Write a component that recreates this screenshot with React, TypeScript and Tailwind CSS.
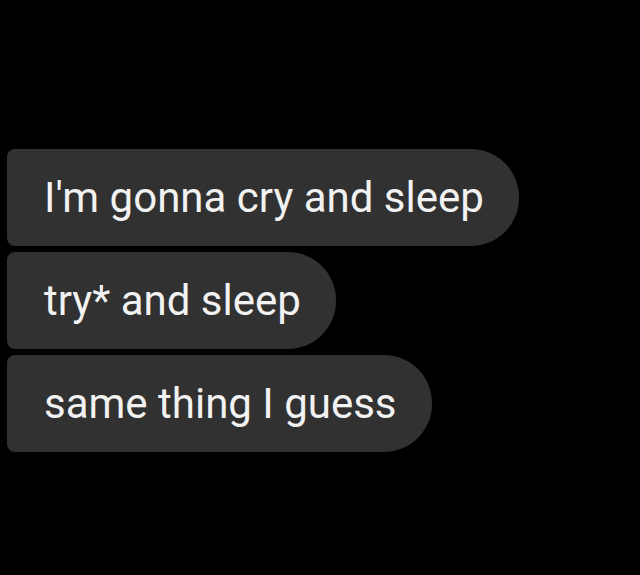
const messages = ["I'm gonna cry and sleep", 'try* and sleep', 'same thing I guess'];

export default function App() {
  return (
    <div className="w-[640px] h-[575px] bg-black overflow-hidden">
      <div className="flex flex-col items-start gap-[6px] pt-[149px] pl-[7px]">
        {messages.map((msg, i) => (
          <div
            key={i}
            className="h-[97px] flex items-center pl-[37px] pr-[35px] bg-[#313131] rounded-l-[8px] rounded-r-[48px] text-[#f2f2f2] text-[42px] whitespace-nowrap"
            style={{ fontFamily: 'Roboto, sans-serif' }}
          >
            {msg}
          </div>
        ))}
      </div>
    </div>
  );
}
